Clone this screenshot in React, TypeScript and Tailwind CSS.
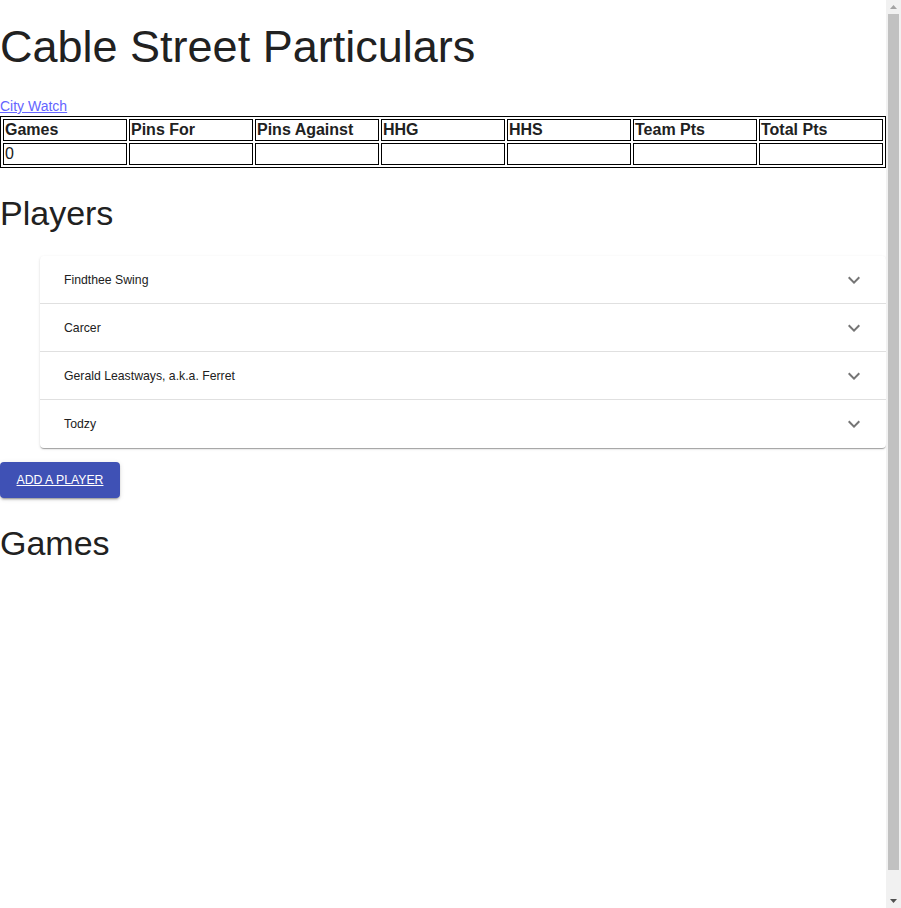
import React from "react";

const players = [
  "Findthee Swing",
  "Carcer",
  "Gerald Leastways, a.k.a. Ferret",
  "Todzy",
];

const headers = ["Games", "Pins For", "Pins Against", "HHG", "HHS", "Team Pts", "Total Pts"];

function ExpandMore() {
  return (
    <svg width="24" height="24" viewBox="0 0 24 24" className="fill-[#757575]">
      <path d="M16.59 8.59L12 13.17 7.41 8.59 6 10l6 6 6-6z" />
    </svg>
  );
}

function Scrollbar() {
  return (
    <div className="flex h-[908px] w-[15px] shrink-0 flex-col bg-[#f1f1f1]">
      <div className="flex h-[14px] items-center justify-center">
        <svg width="7" height="4" viewBox="0 0 7 4">
          <polygon points="3.5,0 7,4 0,4" fill="#a3a3a3" />
        </svg>
      </div>
      <div className="flex-1 px-[2px]">
        <div className="h-[856px] bg-[#c1c1c1]" />
      </div>
      <div className="flex h-[14px] items-center justify-center">
        <svg width="7" height="4" viewBox="0 0 7 4">
          <polygon points="0,0 7,0 3.5,4" fill="#505050" />
        </svg>
      </div>
    </div>
  );
}

export default function App() {
  return (
    <div className="flex h-[908px] overflow-hidden bg-white text-[#212121] font-['Liberation_Sans',Arial,sans-serif]">
      <div className="min-w-0 flex-1">
        <h1 className="pt-[21px] text-[45px] leading-[52px] font-normal">Cable Street Particulars</h1>
        <div className="mt-[23px] text-[14px] leading-[20px]">
          <a href="#" className="text-[#6464ff] underline">City Watch</a>
        </div>
        <table className="w-full table-fixed border border-black border-separate border-spacing-[2px] text-[16px] leading-[18px]">
          <thead>
            <tr>
              {headers.map((h) => (
                <th key={h} className="border border-black p-px text-left font-bold">{h}</th>
              ))}
            </tr>
          </thead>
          <tbody>
            <tr>
              {headers.map((h, i) => (
                <td key={h} className="h-[22px] border border-black p-px">{i === 0 ? "0" : ""}</td>
              ))}
            </tr>
          </tbody>
        </table>
        <h2 className="mt-[24px] text-[34px] leading-[42px] font-normal">Players</h2>
        <div className="mt-[22px] pl-[40px]">
          <div className="rounded bg-white shadow-[0px_2px_1px_-1px_rgba(0,0,0,0.2),0px_1px_1px_0px_rgba(0,0,0,0.14),0px_1px_3px_0px_rgba(0,0,0,0.12)]">
            {players.map((p, i) => (
              <div
                key={p}
                className={`flex h-[48px] items-center justify-between border-b pl-[24px] pr-[20px] ${i < players.length - 1 ? "border-[#e0e0e0]" : "border-transparent"}`}
              >
                <span className="text-[12.25px] leading-[16px]">{p}</span>
                <ExpandMore />
              </div>
            ))}
          </div>
        </div>
        <div className="mt-[14px]">
          <a
            href="#"
            className="inline-flex h-[36px] w-[120px] items-center justify-center rounded bg-[#3f51b5] text-[12.25px] text-white underline shadow-[0px_3px_1px_-2px_rgba(0,0,0,0.2),0px_2px_2px_0px_rgba(0,0,0,0.14),0px_1px_5px_0px_rgba(0,0,0,0.12)]"
          >
            ADD A PLAYER
          </a>
        </div>
        <h2 className="mt-[24px] text-[34px] leading-[42px] font-normal">Games</h2>
      </div>
      <Scrollbar />
    </div>
  );
}
